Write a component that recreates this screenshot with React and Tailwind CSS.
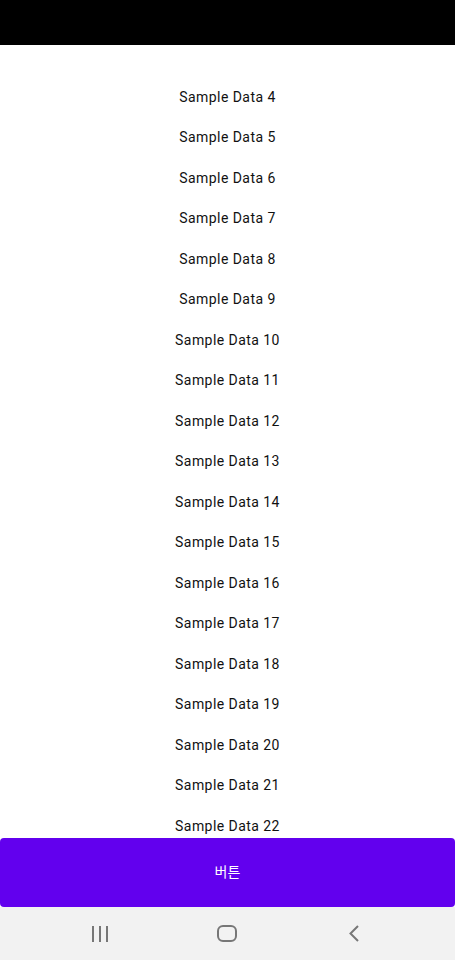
import React from 'react';

const items = Array.from({ length: 19 }, (_, i) => `Sample Data ${i + 4}`);

const App = () => {
  return (
    <div className="flex h-[960px] w-[455px] flex-col bg-white font-['Roboto',sans-serif]">
      {/* Status bar */}
      <div className="h-[45px] shrink-0 bg-black" />

      {/* List */}
      <div className="flex-1 overflow-hidden pt-[31.75px]">
        {items.map((item) => (
          <div
            key={item}
            className="flex h-[40.5px] items-center justify-center text-[14px] tracking-[0.45px] text-[#111]"
          >
            {item}
          </div>
        ))}
      </div>

      {/* Button */}
      <button className="flex h-[69px] shrink-0 items-center justify-center rounded-[4px] bg-[#6200ee] text-[14px] text-white font-['Roboto','Noto_Sans_CJK_KR',sans-serif]">
        버튼
      </button>

      {/* Navigation bar */}
      <div className="flex h-[53px] shrink-0 items-center bg-[#f2f2f2] pl-[91px]">
        <svg width="18" height="16" viewBox="0 0 18 16" className="text-[#777]">
          <rect x="1" y="0" width="2" height="16" fill="currentColor" />
          <rect x="8" y="0" width="2" height="16" fill="currentColor" />
          <rect x="15" y="0" width="2" height="16" fill="currentColor" />
        </svg>
        <svg width="20" height="17" viewBox="0 0 20 17" className="ml-[108px] text-[#777]">
          <rect x="1" y="1" width="18" height="15" rx="5" fill="none" stroke="currentColor" strokeWidth="2" />
        </svg>
        <svg width="12" height="17" viewBox="0 0 12 17" className="ml-[111px] text-[#777]">
          <path d="M10 1 L2.5 8.5 L10 16" fill="none" stroke="currentColor" strokeWidth="2" />
        </svg>
      </div>
    </div>
  );
};

export default App;
